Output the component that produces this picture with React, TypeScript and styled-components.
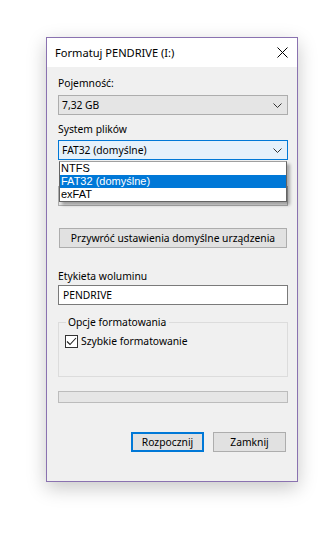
import React from 'react';
import styled, { createGlobalStyle } from 'styled-components';

const GlobalStyle = createGlobalStyle`
  html, body {
    margin: 0;
    padding: 0;
    background: #ffffff;
  }
  body {
    font-family: 'Noto Sans', 'Open Sans', sans-serif;
    font-size: 10.3px;
    color: #000;
  }
`;

const Page = styled.div`
  padding: 37px 0 0 46px;
  height: 538px;
  box-sizing: border-box;
`;

const Dialog = styled.div`
  width: 252px;
  height: 445px;
  box-sizing: border-box;
  border: 1px solid #8a72b0;
  background: #f0f0f0;
  box-shadow: 0 6px 18px rgba(0, 0, 0, 0.22);
  display: flex;
  flex-direction: column;
`;

const TitleBar = styled.div`
  height: 29px;
  background: #ffffff;
  display: flex;
  align-items: center;
  justify-content: space-between;
  padding: 0 9px 0 8px;
  font-size: 11.1px;
`;

const Body = styled.div`
  flex: 1;
  padding: 8px 9px 0 11px;
  display: flex;
  flex-direction: column;
`;

const Label = styled.div<{ $top?: number; $covered?: boolean }>`
  line-height: 16px;
  margin-top: ${(p) => p.$top ?? 0}px;
  white-space: nowrap;
  visibility: ${(p) => (p.$covered ? 'hidden' : 'visible')};
`;

const Combo = styled.div<{ $active?: boolean; $top?: number }>`
  height: 20px;
  box-sizing: border-box;
  margin-top: ${(p) => p.$top ?? 0}px;
  border: 1px solid ${(p) => (p.$active ? '#0078d7' : '#adadad')};
  background: ${(p) => (p.$active ? '#e5f1fb' : '#e5e5e5')};
  display: flex;
  align-items: center;
  justify-content: space-between;
  padding: 0 5px 0 3px;
  line-height: 18px;
`;

const ComboText = styled.span<{ $covered?: boolean }>`
  visibility: ${(p) => (p.$covered ? 'hidden' : 'visible')};
`;

const ComboWrap = styled.div<{ $top?: number }>`
  position: relative;
  margin-top: ${(p) => p.$top ?? 0}px;
`;

const List = styled.div`
  position: absolute;
  left: 1px;
  right: 1px;
  top: 21px;
  z-index: 2;
  background: #ffffff;
  border: 1px solid #646464;
  border-top-color: #a0a0a0;
  box-shadow: 3px 3px 3px rgba(0, 0, 0, 0.3);
  font-family: 'Liberation Sans', Arial, sans-serif;
  font-size: 11px;
`;

const ListItem = styled.div<{ $selected?: boolean }>`
  height: 13px;
  line-height: 13px;
  padding-left: 1px;
  background: ${(p) => (p.$selected ? '#0078d7' : 'transparent')};
  color: ${(p) => (p.$selected ? '#ffffff' : '#000000')};
`;

const PushButton = styled.button<{ $primary?: boolean; $top?: number }>`
  font-family: inherit;
  font-size: 10.3px;
  color: #000;
  height: 20px;
  box-sizing: border-box;
  margin-top: ${(p) => p.$top ?? 0}px;
  padding: 0;
  background: #e1e1e1;
  border: ${(p) => (p.$primary ? '2px solid #0078d7' : '1px solid #adadad')};
  line-height: 16px;
  white-space: nowrap;
  cursor: default;
`;

const WideButton = styled(PushButton)`
  margin-left: 1px;
  margin-right: 1px;
`;

const TextInput = styled.div`
  height: 20px;
  box-sizing: border-box;
  margin-top: 1px;
  border: 1px solid #7a7a7a;
  background: #ffffff;
  padding: 0 4px;
  line-height: 18px;
`;

const Group = styled.fieldset`
  margin: 9px 0 0 0;
  padding: 3px 6px 0 6px;
  height: 63px;
  box-sizing: border-box;
  border: 1px solid #dcdcdc;
  min-width: 0;
`;

const Legend = styled.legend`
  margin-left: 1px;
  padding: 0 3px 0 2px;
  line-height: 16px;
`;

const CheckRow = styled.label`
  display: flex;
  align-items: center;
  gap: 3px;
  line-height: 16px;
`;

const CheckBox = styled.span`
  width: 13px;
  height: 13px;
  box-sizing: border-box;
  border: 1px solid #333333;
  background: #ffffff;
  display: flex;
  align-items: center;
  justify-content: center;
`;

const Progress = styled.div`
  height: 12px;
  margin-top: 14px;
  box-sizing: border-box;
  border: 1px solid #bcbcbc;
  background: #e6e6e6;
`;

const Footer = styled.div`
  display: flex;
  justify-content: flex-end;
  gap: 9px;
  margin-top: 29px;
  padding-right: 2px;
`;

const FooterButton = styled(PushButton)`
  width: 73px;
`;

const Chevron = () => (
  <svg width="9" height="5" viewBox="0 0 9 5">
    <path d="M0.5 0.5 L4.5 4.5 L8.5 0.5" fill="none" stroke="#333" strokeWidth="1" />
  </svg>
);

const CloseIcon = () => (
  <svg width="11" height="11" viewBox="0 0 11 11">
    <path d="M0.5 0.5 L10.5 10.5 M10.5 0.5 L0.5 10.5" stroke="#000" strokeWidth="1" />
  </svg>
);

export default function App() {
  return (
    <>
      <GlobalStyle />
      <Page>
        <Dialog>
          <TitleBar>
            <span>Formatuj PENDRIVE (I:)</span>
            <CloseIcon />
          </TitleBar>
          <Body>
            <Label>Pojemność:</Label>
            <Combo $top={4}>
              <span>7,32 GB</span>
              <Chevron />
            </Combo>

            <Label $top={6}>System plików</Label>
            <ComboWrap $top={3}>
              <Combo $active>
                <span>FAT32 (domyślne)</span>
                <Chevron />
              </Combo>
              <List>
                <ListItem>NTFS</ListItem>
                <ListItem $selected>FAT32 (domyślne)</ListItem>
                <ListItem>exFAT</ListItem>
              </List>
            </ComboWrap>

            {/* allocation unit row, hidden behind the open list */}
            <Label $top={6} $covered>Rozmiar jednostki alokacji</Label>
            <Combo $top={4}>
              <ComboText $covered>4096 bajtów</ComboText>
              <Chevron />
            </Combo>

            <WideButton $top={22}>Przywróć ustawienia domyślne urządzenia</WideButton>

            <Label $top={20}>Etykieta woluminu</Label>
            <TextInput>PENDRIVE</TextInput>

            <Group>
              <Legend>Opcje formatowania</Legend>
              <CheckRow>
                <CheckBox>
                  <svg width="11" height="9" viewBox="0 0 11 9">
                    <path d="M1 4.5 L4 7.5 L10 1" fill="none" stroke="#222" strokeWidth="1.1" />
                  </svg>
                </CheckBox>
                Szybkie formatowanie
              </CheckRow>
            </Group>

            <Progress />

            <Footer>
              <FooterButton $primary>Rozpocznij</FooterButton>
              <FooterButton>Zamknij</FooterButton>
            </Footer>
          </Body>
        </Dialog>
      </Page>
    </>
  );
}
